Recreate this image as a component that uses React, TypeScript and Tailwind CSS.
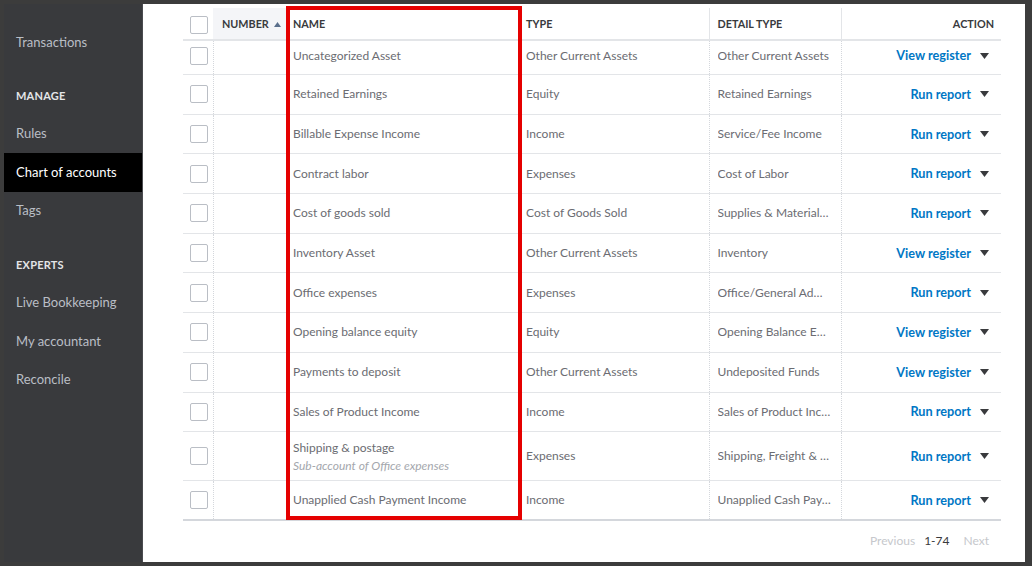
import React from "react";

type Row = {
  name: string;
  sub?: string;
  type: string;
  detail: string;
  action: "View register" | "Run report";
};

const rows: Row[] = [
  { name: "Uncategorized Asset", type: "Other Current Assets", detail: "Other Current Assets", action: "View register" },
  { name: "Retained Earnings", type: "Equity", detail: "Retained Earnings", action: "Run report" },
  { name: "Billable Expense Income", type: "Income", detail: "Service/Fee Income", action: "Run report" },
  { name: "Contract labor", type: "Expenses", detail: "Cost of Labor", action: "Run report" },
  { name: "Cost of goods sold", type: "Cost of Goods Sold", detail: "Supplies & Material…", action: "Run report" },
  { name: "Inventory Asset", type: "Other Current Assets", detail: "Inventory", action: "View register" },
  { name: "Office expenses", type: "Expenses", detail: "Office/General Ad…", action: "Run report" },
  { name: "Opening balance equity", type: "Equity", detail: "Opening Balance E…", action: "View register" },
  { name: "Payments to deposit", type: "Other Current Assets", detail: "Undeposited Funds", action: "View register" },
  { name: "Sales of Product Income", type: "Income", detail: "Sales of Product Inc…", action: "Run report" },
  {
    name: "Shipping & postage",
    sub: "Sub-account of Office expenses",
    type: "Expenses",
    detail: "Shipping, Freight & …",
    action: "Run report",
  },
  { name: "Unapplied Cash Payment Income", type: "Income", detail: "Unapplied Cash Pay…", action: "Run report" },
];

const font = { fontFamily: "Lato, 'Noto Sans', sans-serif" };

function Checkbox() {
  return <div className="w-[18px] h-[18px] rounded-[2px] border border-[#babec5] bg-white" />;
}

function Caret() {
  return (
    <svg width="9" height="6" viewBox="0 0 9 6" className="ml-[9px]">
      <path d="M0 0h9L4.5 6z" fill="#393a3d" />
    </svg>
  );
}

function NavItem({ label, active }: { label: string; active?: boolean }) {
  return (
    <div
      className={`h-[38.6px] flex items-center pl-3 text-[13px] ${
        active ? "bg-black text-white" : "text-[#babec5]"
      }`}
    >
      {label}
    </div>
  );
}

function Section({ label }: { label: string }) {
  return (
    <div className="h-[36px] mt-[17px] flex items-center pl-3 text-[11px] font-bold tracking-[0.02em] text-[#e4e5e8]">
      {label}
    </div>
  );
}

export default function App() {
  return (
    <div className="w-[1032px] h-[566px] bg-[#3c3c3c] pt-[4px] pl-[4px] overflow-hidden" style={font}>
      <div className="flex h-[558px] w-[1021px]">
        <aside className="w-[139px] bg-[#393a3d] pt-[19px] border-r border-[#4a4b4f]">
          <NavItem label="Transactions" />
          <Section label="MANAGE" />
          <NavItem label="Rules" />
          <NavItem label="Chart of accounts" active />
          <NavItem label="Tags" />
          <Section label="EXPERTS" />
          <NavItem label="Live Bookkeeping" />
          <NavItem label="My accountant" />
          <NavItem label="Reconcile" />
        </aside>

        <main className="flex-1 bg-white pl-[40px] pr-[24px] pt-[4px]">
          <div className="relative w-[818px]">
            <table className="w-[818px] table-fixed border-collapse text-[12px] text-[#6b6c72]">
              <colgroup>
                <col className="w-[30px]" />
                <col className="w-[73px]" />
                <col className="w-[234px]" />
                <col className="w-[189px]" />
                <col className="w-[132px]" />
                <col className="w-[160px]" />
              </colgroup>
              <thead>
                <tr className="h-[32px] text-[10.8px] font-bold text-[#393a3d] border-b-2 border-[#e3e5e8]">
                  <th className="text-left align-middle pl-[7px] pt-[2px]">
                    <Checkbox />
                  </th>
                  <th className="text-left bg-[#f4f5f8] pl-[9px] pt-[1px] font-bold">
                    <span className="inline-flex items-center">
                      NUMBER
                      <svg width="7" height="5" viewBox="0 0 7 5" className="ml-[5px]">
                        <path d="M0 5h7L3.5 0z" fill="#5a6f8c" />
                      </svg>
                    </span>
                  </th>
                  <th className="text-left pl-[7px] pt-[1px] font-bold">NAME</th>
                  <th className="text-left pl-[6px] pt-[1px] font-bold">TYPE</th>
                  <th className="text-left pl-[8px] pt-[1px] font-bold border-l border-[#e3e5e8]">DETAIL TYPE</th>
                  <th className="text-right pr-[7px] pt-[1px] font-bold border-l border-[#e3e5e8]">ACTION</th>
                </tr>
              </thead>
              <tbody>
                {rows.map((r, i) => (
                  <tr
                    key={r.name}
                    className={`${
                      i === 0 ? "h-[34.5px]" : r.sub ? "h-[49px]" : "h-[39.7px]"
                    } ${i === rows.length - 1 ? "border-b-2 border-[#d4d7dc]" : "border-b border-[#e3e5e8]"}`}
                  >
                    <td className={`pl-[7px] ${i === 0 ? "pb-[3px]" : ""}`}>
                      <Checkbox />
                    </td>
                    <td className="border-l border-dotted border-[#d4d7dc]" />
                    <td className={`pl-[7px] ${i === 0 ? "pb-[3px]" : ""}`}>
                      <div className="truncate">{r.name}</div>
                      {r.sub && <div className="italic text-[#a4a7ad] leading-[17px]">{r.sub}</div>}
                    </td>
                    <td className={`pl-[6px] ${i === 0 ? "pb-[3px]" : ""}`}>{r.type}</td>
                    <td className={`pl-[8px] border-l border-dotted border-[#d4d7dc] ${i === 0 ? "pb-[3px]" : ""}`}>
                      <div className="truncate">{r.detail}</div>
                    </td>
                    <td
                      className={`border-l border-dotted border-[#d4d7dc] pr-[12px] text-[12.7px] ${
                        i === 0 ? "pb-[3px]" : ""
                      }`}
                    >
                      <div className="flex items-center justify-end font-bold text-[#0077c5]">
                        {r.action}
                        <Caret />
                      </div>
                    </td>
                  </tr>
                ))}
              </tbody>
            </table>
            <div className="absolute left-[103px] top-[-2px] w-[236px] h-[514px] border-[4.5px] border-[#e50000] pointer-events-none" />
          </div>

          <div className="w-[818px] flex justify-end items-center gap-[9px] mt-[11px] pr-[12px] text-[12px]">
            <span className="text-[#c6c8cc]">Previous</span>
            <span className="text-[#393a3d]">1-74</span>
            <span className="text-[#c6c8cc] ml-[5px]">Next</span>
          </div>
        </main>
      </div>
    </div>
  );
}
